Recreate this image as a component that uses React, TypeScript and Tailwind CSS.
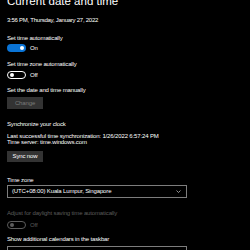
import React from "react";

const Toggle = ({ on, disabled }: { on?: boolean; disabled?: boolean }) => {
  if (on) {
    return (
      <div className="w-[19px] h-[8px] rounded-full bg-[#0a74d6] flex items-center justify-end pr-[2px]">
        <div className="w-[4px] h-[4px] rounded-full bg-white" />
      </div>
    );
  }
  return (
    <div
      className={`w-[19px] h-[8px] rounded-full border flex items-center pl-[2px] ${
        disabled ? "border-[#5c5c5c]" : "border-white"
      }`}
    >
      <div className={`w-[4px] h-[4px] rounded-full ${disabled ? "bg-[#5c5c5c]" : "bg-white"}`} />
    </div>
  );
};

const Dropdown = ({ text }: { text?: string }) => (
  <div className="w-[180px] h-[13px] border border-[#7d7d7d] flex items-center justify-between px-[4px] shrink-0">
    <span className="text-[6px] tracking-[-0.14px] text-white">{text}</span>
    {text && (
      <svg width="5" height="3" viewBox="0 0 10 6" className="mr-[1px]">
        <path d="M1 1l4 4 4-4" stroke="#cfcfcf" strokeWidth="1.4" fill="none" />
      </svg>
    )}
  </div>
);

export default function App() {
  return (
    <div className="w-[250px] h-[250px] bg-black overflow-hidden font-['Liberation_Sans',Arial,sans-serif] text-white">
      <div className="pl-[7px] flex flex-col text-[6px] tracking-[-0.14px]">
        <div className="h-[14px] -mt-[5px] flex items-center text-[11.5px] tracking-normal leading-none">
          Current date and time
        </div>
        <div className="h-[8px] mt-[7px] flex items-center tracking-[-0.25px]">
          3:56 PM, Thursday, January 27, 2022
        </div>
        <div className="h-[8px] mt-[10px] flex items-center">Set time automatically</div>
        <div className="h-[8px] mt-[2px] flex items-center gap-[4px]">
          <Toggle on />
          <span>On</span>
        </div>
        <div className="h-[8px] mt-[8px] flex items-center">Set time zone automatically</div>
        <div className="h-[8px] mt-[3px] flex items-center gap-[4px]">
          <Toggle />
          <span>Off</span>
        </div>
        <div className="h-[8px] mt-[7px] flex items-center">Set the date and time manually</div>
        <button className="w-[36px] h-[12px] mt-[3px] bg-[#333333] text-[#7a7a7a] flex items-center justify-center">
          Change
        </button>
        <div className="h-[9px] mt-[11px] flex items-center">Synchronize your clock</div>
        <div className="h-[6px] mt-[4px] flex items-center">
          Last successful time synchronization: 1/26/2022 6:57:24 PM
        </div>
        <div className="h-[7px] flex items-center">Time server: time.windows.com</div>
        <button className="w-[36px] h-[11px] mt-[5px] bg-[#333333] text-white flex items-center justify-center">
          Sync now
        </button>
        <div className="h-[8px] mt-[14px] flex items-center">Time zone</div>
        <div className="mt-[1px]">
          <Dropdown text="(UTC+08:00) Kuala Lumpur, Singapore" />
        </div>
        <div className="h-[8px] mt-[11px] flex items-center text-[#5c5c5c]">
          Adjust for daylight saving time automatically
        </div>
        <div className="h-[8px] mt-[4px] flex items-center gap-[4px] text-[#5c5c5c]">
          <Toggle disabled />
          <span>Off</span>
        </div>
        <div className="h-[8px] mt-[6px] flex items-center">Show additional calendars in the taskbar</div>
        <div className="mt-[3px]">
          <Dropdown />
        </div>
      </div>
    </div>
  );
}
